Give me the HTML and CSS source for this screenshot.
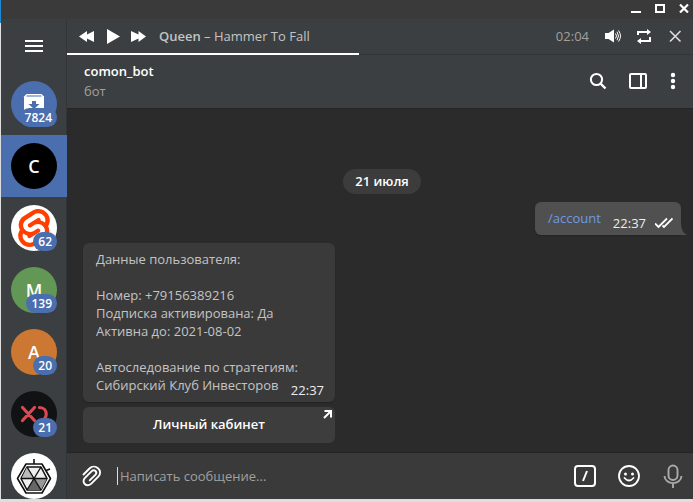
FILE: index.html
```html
<!DOCTYPE html>
<html lang="ru">
<head>
<meta charset="utf-8">
<title>comon_bot</title>
<link rel="stylesheet" href="styles.css">
</head>
<body>
<div class="window">
  <header class="titlebar">
    <button class="icon-button" aria-label="Свернуть"><svg width="12" height="12" viewBox="0 0 12 12"><path d="M1 10h10v2H1z" fill="#fff"/></svg></button>
    <button class="icon-button" aria-label="Развернуть"><svg width="12" height="12" viewBox="0 0 12 12"><path d="M2 4h8v7H2z" fill="none" stroke="#fff" stroke-width="2"/></svg></button>
    <button class="icon-button" aria-label="Закрыть"><svg width="12" height="12" viewBox="0 0 12 12"><path d="M2 3.500l8 8M10 3.500l-8 8" stroke="#fff" stroke-width="2.200"/></svg></button>
  </header>
  <div class="workspace">
    <nav class="sidebar" aria-label="Чаты">
      <button class="icon-button menu" aria-label="Меню"><svg width="18" height="12" viewBox="0 0 18 12"><path d="M0 1h18M0 6h18M0 11h18" stroke="#fff" stroke-width="2"/></svg></button>
      <a class="chat-item" href="#archive" aria-label="Архив">
        <span class="avatar avatar-archive">
          <svg width="46" height="46" viewBox="0 0 46 46"><path d="M15.500 13h15l2.500 2.500V29H13V15.500z" fill="#fff"/><path d="M15.500 15h15" stroke="#4a6faf" stroke-width="1.200"/><path d="M21 20h4v3h3.500L23 28l-5.500-5H21z" fill="#4a6faf"/></svg>
        </span>
        <span class="badge">7824</span>
      </a>
      <a class="chat-item selected" href="#comon"><span class="avatar avatar-black">C</span></a>
      <a class="chat-item" href="#svelte" aria-label="Svelte">
        <span class="avatar avatar-white">
          <svg width="38" height="38" viewBox="0 0 24 24"><path fill="#ff3e00" d="M10.354 21.125a4.440 4.440 0 0 1-4.765-1.767 4.109 4.109 0 0 1-.703-3.107 3.898 3.898 0 0 1 .134-.522l.105-.321.287.210a7.210 7.210 0 0 0 2.186 1.092l.208.063-.020.208a1.253 1.253 0 0 0 .226.830 1.337 1.337 0 0 0 1.435.533 1.231 1.231 0 0 0 .343-.150l5.590-3.562a1.164 1.164 0 0 0 .524-.778 1.242 1.242 0 0 0-.211-.937 1.338 1.338 0 0 0-1.435-.533 1.230 1.230 0 0 0-.343.150l-2.133 1.360a4.078 4.078 0 0 1-1.135.499 4.440 4.440 0 0 1-4.765-1.766 4.108 4.108 0 0 1-.702-3.108 3.855 3.855 0 0 1 1.742-2.582l5.589-3.563a4.072 4.072 0 0 1 1.135-.499 4.440 4.440 0 0 1 4.765 1.767 4.109 4.109 0 0 1 .703 3.107 3.943 3.943 0 0 1-.134.522l-.105.321-.286-.210a7.204 7.204 0 0 0-2.187-1.093l-.208-.063.020-.207a1.255 1.255 0 0 0-.226-.831 1.337 1.337 0 0 0-1.435-.532 1.231 1.231 0 0 0-.343.150L8.620 9.368a1.162 1.162 0 0 0-.524.778 1.240 1.240 0 0 0 .211.937 1.338 1.338 0 0 0 1.435.533 1.235 1.235 0 0 0 .344-.151l2.132-1.360a4.067 4.067 0 0 1 1.135-.498 4.440 4.440 0 0 1 4.765 1.766 4.108 4.108 0 0 1 .702 3.108 3.857 3.857 0 0 1-1.742 2.583l-5.589 3.562a4.072 4.072 0 0 1-1.135.499m10.358-17.950C18.484-.015 14.082-.960 10.900 1.068L5.310 4.630a6.412 6.412 0 0 0-2.896 4.295 6.753 6.753 0 0 0 .666 4.336 6.430 6.430 0 0 0-.960 2.396 6.833 6.833 0 0 0 1.168 5.167c2.229 3.190 6.630 4.135 9.812 2.108l5.590-3.562a6.410 6.410 0 0 0 2.896-4.295 6.756 6.756 0 0 0-.665-4.336 6.429 6.429 0 0 0 .958-2.396 6.831 6.831 0 0 0-1.167-5.168Z"/></svg>
        </span>
        <span class="badge">62</span>
      </a>
      <a class="chat-item" href="#m"><span class="avatar avatar-green">M</span><span class="badge">139</span></a>
      <a class="chat-item" href="#a"><span class="avatar avatar-orange">A</span><span class="badge">20</span></a>
      <a class="chat-item" href="#xo" aria-label="Канал">
        <span class="avatar avatar-dark">
          <svg width="46" height="46" viewBox="0 0 46 46" fill="none" stroke="#da4a50" stroke-width="3.200" stroke-linecap="round"><path d="M11.500 16.500l12 13M23.500 16.500l-12 13M28.500 16.500c9 0 9 13 0 13"/></svg>
        </span>
        <span class="badge">21</span>
      </a>
      <a class="chat-item" href="#hex" aria-label="Группа">
        <span class="avatar avatar-white">
          <svg width="46" height="46" viewBox="0 0 46 46" stroke="#111" stroke-linejoin="round"><path d="M23 6v5M34 18l5-2" stroke-width="1.600" fill="none"/><path d="M15 11h16l8.500 14.500L31 40H15L6.500 25.500z" fill="#fff" stroke-width="1.600"/><path d="M16 14h14l6 11.500L30 37H16l-6-11.500z" fill="#eee" stroke-width="1.600"/><path d="M23 25.500L10.500 25.500 16 14z" fill="#bbb" stroke="none"/><path d="M23 25.500L16 37h14z" fill="#666" stroke="none"/><path d="M23 25.500L30 37l6-11.500z" fill="#999" stroke="none"/><path d="M10 25.500h26M16 14l14 23M30 14L16 37" fill="none" stroke-width="1.400"/></svg>
        </span>
      </a>
    </nav>
    <main class="content">
      <section class="player" aria-label="Плеер">
        <button class="icon-button" aria-label="Назад"><svg width="16" height="16" viewBox="0 0 16 16"><path d="M0 8.500L8 3v3.500L15 3v11l-7-3.500V14z" fill="#fff"/></svg></button>
        <button class="icon-button" aria-label="Играть"><svg width="16" height="16" viewBox="0 0 16 16"><path d="M2 1l13 7.500L2 16z" fill="#fff"/></svg></button>
        <button class="icon-button" aria-label="Вперёд"><svg width="16" height="16" viewBox="0 0 16 16"><path d="M15 8.500L7.500 3v3.500L0 3v11l7.500-3.500V14z" fill="#fff"/></svg></button>
        <p class="track"><b>Queen</b> – Hammer To Fall</p>
        <time class="elapsed">02:04</time>
        <button class="icon-button" aria-label="Громкость"><svg width="16" height="16" viewBox="0 0 16 16"><path d="M0 5h3.500L9 1.500v13L3.500 11H0z" fill="#fff"/><path d="M10.500 5.500q2 2.500 0 5M12 3.800q3 4.200 0 8.400M13.500 2.500q4 5.500 0 11" fill="none" stroke="#fff"/></svg></button>
        <button class="icon-button" aria-label="Повтор"><svg width="16" height="16" viewBox="0 0 16 16"><path d="M2 7V4h10M14 9v4H4" fill="none" stroke="#fff" stroke-width="2"/><path d="M11 1l4 3-4 3zM5 10l-4 3 4 3z" fill="#fff"/></svg></button>
        <button class="icon-button" aria-label="Закрыть плеер"><svg width="16" height="16" viewBox="0 0 16 16"><path d="M3 3l10.500 10.500M13.500 3L3 13.500" stroke="#ddd" stroke-width="1.600"/></svg></button>
        <progress class="seek" value="292" max="626" aria-label="Прогресс"></progress>
      </section>
      <header class="chat-header">
        <div class="peer">
          <h1>comon_bot</h1>
          <p>бот</p>
        </div>
        <button class="icon-button" aria-label="Поиск"><svg width="18" height="18" viewBox="0 0 18 18" fill="none" stroke="#fff"><circle cx="7.500" cy="7.500" r="5.600" stroke-width="2"/><path d="M11.500 11.500l5 5" stroke-width="2.400"/></svg></button>
        <button class="icon-button" aria-label="Панель"><svg width="18" height="18" viewBox="0 0 18 18" fill="none" stroke="#fff" stroke-width="2"><rect x="1" y="2" width="16" height="14" rx="1"/><path d="M12 2v14"/></svg></button>
        <button class="icon-button" aria-label="Ещё"><svg width="8" height="18" viewBox="0 0 8 18" fill="#fff"><circle cx="4" cy="3" r="2.200"/><circle cx="4" cy="9" r="2.200"/><circle cx="4" cy="15" r="2.200"/></svg></button>
      </header>
      <section class="history">
        <p class="date">21 июля</p>
        <article class="message outgoing">
          <a href="#account">/account</a>
          <span class="meta"><time>22:37</time>
            <svg width="18" height="12" viewBox="0 0 18 12" fill="none" stroke="#fff" stroke-width="1.800"><path d="M0 6.500l3.500 3.500L12 1.500M7.500 8.500L9 10l8.500-8.500"/></svg></span>
          <svg class="tail" width="7" height="12" viewBox="0 0 7 12"><path d="M0 0q0 9 6 12H0z" fill="#505050"/></svg>
        </article>
        <div class="incoming-group">
          <article class="message incoming">
            <p>Данные пользователя:</p>
            <p>Номер: +79156389216<br>Подписка активирована: Да<br>Активна до: 2021-08-02</p>
            <p>Автоследование по стратегиям:<br>Сибирский Клуб Инвесторов</p>
            <time>22:37</time>
          </article>
          <a class="bot-button" href="#cabinet">Личный кабинет
            <svg class="corner" width="9" height="9" viewBox="0 0 9 9" fill="none" stroke="#fff" stroke-width="2"><path d="M1.500 1H8v6.500M8 1L1 8"/></svg></a>
        </div>
      </section>
      <form class="composer">
        <button type="button" class="icon-button" aria-label="Прикрепить"><svg width="20" height="22" viewBox="0 0 20 22" fill="none" stroke="#fff" stroke-width="1.900" stroke-linecap="round"><path d="M1.500 9.500L7.500 3.500C10 1 13.500 1 16 3.200s3 5.800.3 8.500l-7 7c-2 2-4.800 2-6.500.3s-1.700-4.300.2-6.200l6.500-6.500c1.300-1.300 3-1.300 4-.3s1 2.700-.2 3.900l-5.600 5.500"/></svg></button>
        <span class="entry"><span class="caret"></span><input type="text" aria-label="Сообщение" placeholder="Написать сообщение..."></span>
        <button type="button" class="icon-button" aria-label="Команды"><svg width="22" height="22" viewBox="0 0 22 22" fill="none" stroke="#fff" stroke-width="2"><rect x="1" y="1" width="20" height="20" rx="3"/><path d="M13 6L9 16"/></svg></button>
        <button type="button" class="icon-button" aria-label="Эмодзи"><svg width="22" height="22" viewBox="0 0 22 22" fill="none" stroke="#fff" stroke-width="1.800"><circle cx="11" cy="11" r="10"/><path d="M6.500 13q4.500 5 9 0" stroke-linecap="round"/><circle cx="7.500" cy="9" r="1.500" fill="#fff" stroke="none"/><circle cx="14.500" cy="9" r="1.500" fill="#fff" stroke="none"/></svg></button>
        <button type="button" class="icon-button" aria-label="Голосовое сообщение"><svg width="22" height="24" viewBox="0 0 22 24" fill="none" stroke="#aaa" stroke-width="1.900"><rect x="6.500" y="1.500" width="9" height="14.500" rx="4.500"/><path d="M2.500 12c.5 9.500 16.500 9.500 17 0M11 19v5"/></svg></button>
      </form>
    </main>
  </div>
</div>
</body>
</html>
```
FILE: styles.css
```css
* { box-sizing: border-box; }

body {
  margin: 0;
  height: 100vh;
  padding: 0 0 3px 1px;
  background: linear-gradient(#1f8ad2 23px, #dedede 23px);
  font: 13px/18px "Open Sans", "Noto Sans", sans-serif;
  color: #c4c4c4;
}

h1, p { margin: 0; font-size: 13px; }
a { text-decoration: none; }

.window {
  height: 100%;
  display: flex;
  flex-direction: column;
  background: #2b2b2b;
}

.icon-button {
  flex: none;
  display: flex;
  padding: 0;
  border: 0;
  background: none;
}

.titlebar {
  flex: none;
  height: 19px;
  display: flex;
  justify-content: flex-end;
  gap: 12px;
  padding: 1px 3px 0 0;
  background: #3a3a3a;
}

.workspace { flex: 1; min-height: 0; display: flex; }

.sidebar {
  flex: none;
  width: 66px;
  overflow: hidden;
  background: #3c3f41;
}

.menu {
  width: 100%;
  height: 54px;
  align-items: center;
  justify-content: center;
}

.chat-item {
  position: relative;
  display: block;
  padding: 8px 10px;
  color: #fff;
}
.selected { background: #4b6eaf; }

.avatar {
  display: flex;
  align-items: center;
  justify-content: center;
  width: 46px;
  height: 46px;
  border-radius: 50%;
  overflow: hidden;
  font-size: 18px;
  font-weight: 600;
}
.avatar-archive { background: #4b6eaf; }
.avatar-black { background: #000; }
.avatar-white { background: #fff; }
.avatar-green { background: #629755; }
.avatar-orange { background: #cc7832; }
.avatar-dark { background: #111214; }

.badge {
  position: absolute;
  right: 10px;
  bottom: 8px;
  padding: 0 5px;
  border-radius: 10px;
  background: #4b6eaf;
  font-size: 12px;
  font-weight: 600;
  line-height: 19px;
}

.content {
  flex: 1;
  min-width: 0;
  display: flex;
  flex-direction: column;
  border-left: 1px solid #323536;
  margin-left: -1px;
}

.player {
  position: relative;
  flex: none;
  height: 36px;
  display: flex;
  align-items: center;
  gap: 10px;
  padding: 0 10px 2px 12px;
  background: #3c3f41;
}
.track { flex: 1; margin-left: 2px; }
.track b { font-weight: 600; }
.elapsed { margin-right: 6px; color: #a0a0a0; }
.elapsed ~ .icon-button + .icon-button { margin-left: 5px; }

.seek {
  appearance: none;
  position: absolute;
  left: 0;
  bottom: 0;
  width: 100%;
  height: 2px;
  border: 0;
}
.seek::-webkit-progress-bar { background: linear-gradient(#3c3f41 1px, #333637 1px); }
.seek::-webkit-progress-value { background: #fff; }

.chat-header {
  flex: none;
  height: 53px;
  display: flex;
  align-items: center;
  gap: 22px;
  padding: 0 16px 2px 17px;
  background: #3c3f41;
}
.peer { flex: 1; display: grid; gap: 2px; }
.peer h1 { font-weight: 600; color: #fff; }
.peer p { color: #a0a0a0; }

.history {
  flex: 1;
  min-height: 0;
  display: flex;
  flex-direction: column;
  justify-content: flex-end;
  gap: 8px;
  padding: 0 12px 9px 16px;
  border-top: 1px solid #262626;
}

.date {
  align-self: center;
  padding: 0 12px;
  border-radius: 13px;
  background: #3c3c3c;
  color: #fff;
  font-weight: 600;
  line-height: 25px;
}

.message {
  position: relative;
  border-radius: 6px;
  box-shadow: 0 1px 1px #242424;
}

.outgoing {
  align-self: flex-end;
  display: flex;
  gap: 12px;
  height: 33px;
  padding: 7px 8px 0 13px;
  border-bottom-right-radius: 0;
  background: #505050;
}
.outgoing a { color: #6f9be0; }
.meta {
  display: flex;
  align-items: center;
  gap: 9px;
  height: 28px;
  color: #eee;
}
.tail { position: absolute; left: 100%; bottom: 0; }

.incoming-group {
  align-self: flex-start;
  display: grid;
  gap: 5px;
  width: 252px;
}
.incoming {
  display: grid;
  gap: 18px;
  padding: 7px 13px 8px;
  background: #3a3a3a;
}
.incoming time {
  position: absolute;
  right: 11px;
  bottom: 3px;
  color: #eee;
}

.bot-button {
  position: relative;
  padding-bottom: 2px;
  border-radius: 6px;
  background: #3d3d3d;
  color: #fff;
  font-weight: 600;
  line-height: 34px;
  text-align: center;
}
.corner { position: absolute; top: 3px; right: 3px; }

.composer {
  flex: none;
  height: 47px;
  display: flex;
  align-items: center;
  gap: 22px;
  padding: 0 9px 0 15px;
  border-top: 1px solid #242424;
  background: #3a3a3a;
}
.entry {
  flex: 1;
  display: flex;
  align-items: center;
  margin-left: -7px;
}
.caret { width: 1px; height: 18px; background: #ddd; }
.entry input {
  flex: 1;
  min-width: 0;
  padding: 0 0 0 2px;
  border: 0;
  outline: 0;
  background: none;
  color: #ddd;
  font: inherit;
}
.entry input::placeholder { color: #a0a0a0; opacity: 1; }
```
